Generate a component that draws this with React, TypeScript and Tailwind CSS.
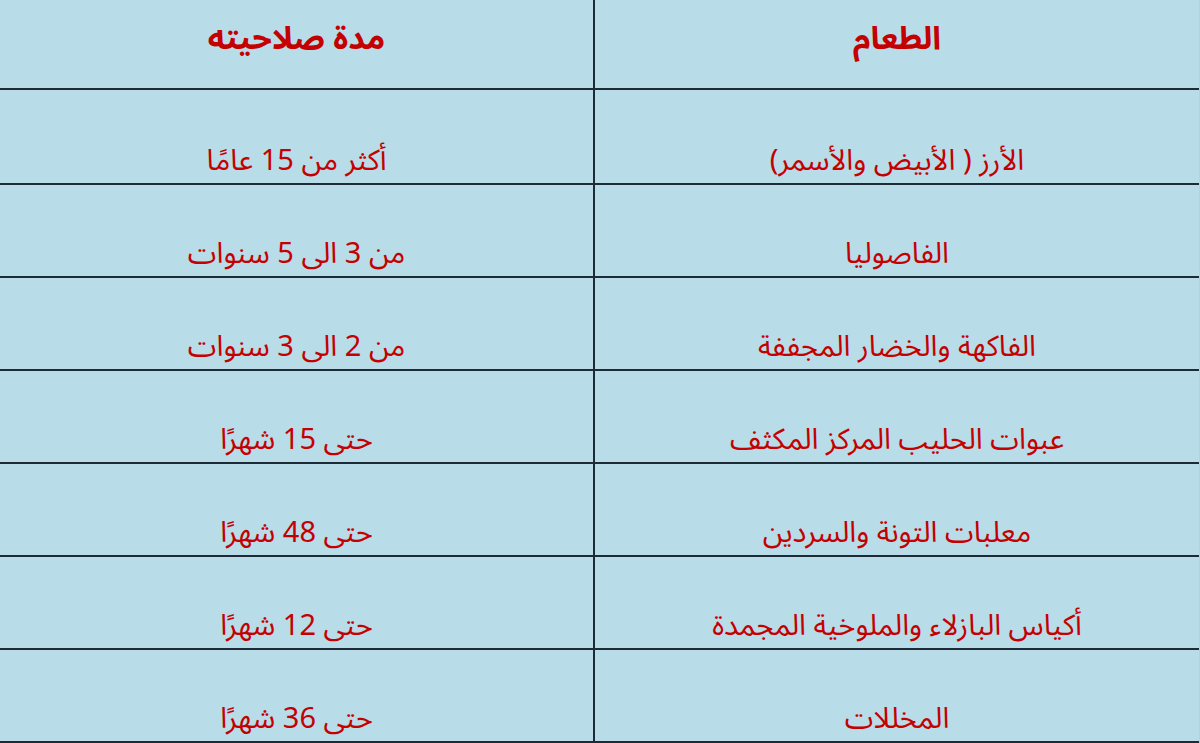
import React from "react";

const rows: [string, string][] = [
  ["الأرز ( الأبيض والأسمر)", "أكثر من 15 عامًا"],
  ["الفاصوليا", "من 3 الى 5 سنوات"],
  ["الفاكهة والخضار المجففة", "من 2 الى 3 سنوات"],
  ["عبوات الحليب المركز المكثف", "حتى 15 شهرًا"],
  ["معلبات التونة والسردين", "حتى 48 شهرًا"],
  ["أكياس البازلاء والملوخية المجمدة", "حتى 12 شهرًا"],
  ["المخللات", "حتى 36 شهرًا"],
];

export default function App() {
  return (
    <div
      dir="rtl"
      className="w-[1200px] bg-[#b8dce8] text-[#c40000] border-r border-r-[#c8ccd0]"
      style={{ fontFamily: '"Noto Sans Arabic", "DejaVu Sans", "Liberation Sans", sans-serif' }}
    >
      <div className="flex h-[90px] border-b-2 border-[#1c2b36]">
        <div className="w-[606px] flex items-center justify-center pb-[10px] text-[32px] leading-[44px] font-bold border-l-2 border-[#1c2b36]">
          الطعام
        </div>
        <div className="flex-1 flex items-center justify-center pb-[10px] text-[32px] leading-[44px] font-bold">
          مدة صلاحيته
        </div>
      </div>
      {rows.map(([food, life], i) => (
        <div
          key={i}
          className={`flex border-b-2 border-[#1c2b36] ${i === 0 ? "h-[95px]" : "h-[93px]"}`}
        >
          <div className="w-[606px] flex items-end justify-center pb-[5px] text-[29px] leading-[34px] border-l-2 border-[#1c2b36]">
            {food}
          </div>
          <div className="flex-1 flex items-end justify-center pb-[5px] text-[29px] leading-[34px]">
            {life}
          </div>
        </div>
      ))}
    </div>
  );
}
